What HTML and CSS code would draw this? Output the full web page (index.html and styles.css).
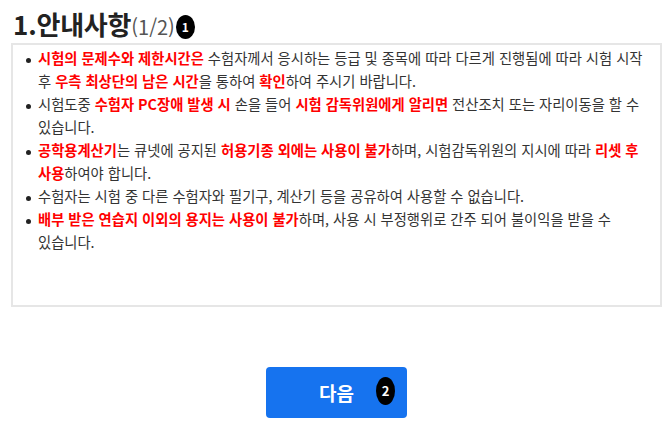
FILE: index.html
```html
<!DOCTYPE html>
<html lang="ko">
  <head>
    <meta charset="UTF-8" />
    <meta name="viewport" content="width=device-width, initial-scale=1.0" />
    <title>안내사항</title>
    <link rel="stylesheet" href="styles.css">
  </head>
  <body>
    <div class="page">
      <h1 class="title">
        1.안내사항<span class="step">(1/2)</span><span class="badge">1</span>
      </h1>

      <div class="notice-box">
        <ul class="notice-list">
          <li><b>시험의 문제수와 제한시간은</b> 수험자께서 응시하는 등급 및 종목에 따라 다르게 진행됨에 따라 시험 시작 후 <b>우측 최상단의 남은 시간</b>을 통하여 <b>확인</b>하여 주시기 바랍니다.</li>
          <li>시험도중 <b>수험자 PC장애 발생 시</b> 손을 들어 <b>시험 감독위원에게 알리면</b> 전산조치 또는 자리이동을 할 수 있습니다.</li>
          <li><b>공학용계산기</b>는 큐넷에 공지된 <b>허용기종 외에는 사용이 불가</b>하며, 시험감독위원의 지시에 따라 <b>리셋 후 사용</b>하여야 합니다.</li>
          <li>수험자는 시험 중 다른 수험자와 필기구, 계산기 등을 공유하여 사용할 수 없습니다.</li>
          <li><b>배부 받은 연습지 이외의 용지는 사용이 불가</b>하며, 사용 시 부정행위로 간주 되어 불이익을 받을 수 있습니다.</li>
        </ul>
      </div>

      <div class="actions">
        <button class="next-btn">다음<span class="badge badge-btn">2</span></button>
      </div>
    </div>
  </body>
</html>
```

FILE: styles.css
```css
/* Global Styles */
body {
  margin: 0;
  font-family: "Noto Sans CJK KR", "Noto Sans", sans-serif;
  color: #333;
  background: #fff;
}

.page {
  padding: 8px 10px 0 11px;
}

.title {
  margin: 0;
  padding-left: 2px;
  font-size: 26px;
  font-weight: 700;
  line-height: 32px;
  color: #222;
  letter-spacing: -0.2px;
}

.step {
  font-size: 20px;
  font-weight: 400;
  color: #555;
  letter-spacing: 0;
}

.badge {
  display: inline-block;
  width: 19px;
  height: 24px;
  border-radius: 50%;
  background-color: #000;
  color: #fff;
  font-size: 12px;
  font-weight: 700;
  line-height: 24px;
  text-align: center;
  vertical-align: 3px;
  margin-left: 1px;
  letter-spacing: 0;
}

/* Notice box */
.notice-box {
  margin-top: 0;
  height: 264px;
  box-sizing: border-box;
  border: 2px solid #e6e6e6;
  background: #fff;
  padding: 1px 10px 0 0;
}

.notice-list {
  margin: 0;
  padding-left: 25px;
  list-style: none;
  font-size: 14.3px;
  line-height: 23px;
  letter-spacing: 0;
  word-break: keep-all;
}

.notice-list li {
  text-indent: -12px;
}

.notice-list li::before {
  content: "";
  display: inline-block;
  width: 5px;
  height: 5px;
  margin-right: 7px;
  border-radius: 50%;
  background-color: #222;
  vertical-align: middle;
}

.notice-list b {
  color: #ff0000;
  font-weight: 700;
}

/* Next button */
.actions {
  display: flex;
  justify-content: center;
  margin-top: 60px;
}

.next-btn {
  position: relative;
  width: 141px;
  height: 51px;
  border: none;
  border-radius: 4px;
  background-color: #1673ef;
  color: #fff;
  font-family: inherit;
  font-size: 19px;
  font-weight: 700;
  cursor: pointer;
}

.badge-btn {
  position: absolute;
  right: 12px;
  top: 10px;
  width: 19px;
  height: 28px;
  line-height: 28px;
  font-size: 13px;
}
```
